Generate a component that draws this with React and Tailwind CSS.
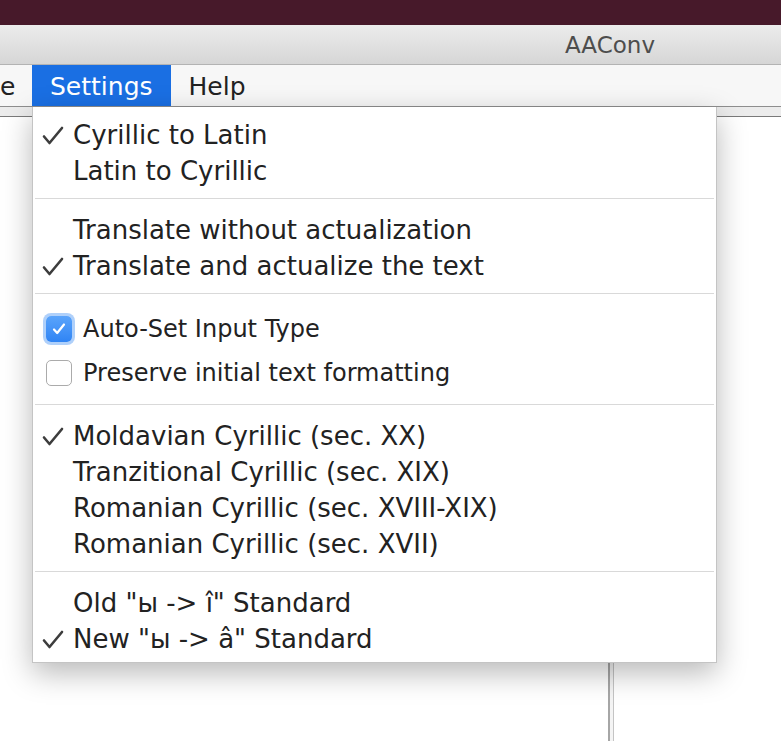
import React from 'react';

const Check = () => (
  <span className="flex w-[40px] pl-[9px] pt-[1px]">
    <svg width="22" height="19" viewBox="0 0 22 19" fill="none">
      <path d="M2 10.5l5.5 6.5L20 2" stroke="#3d3d3d" strokeWidth="2.6" strokeLinecap="round" strokeLinejoin="round" />
    </svg>
  </span>
);

const Item = ({ checked, children }) => (
  <div className="flex h-[36px] items-center whitespace-nowrap">
    {checked ? <Check /> : <span className="w-[40px]" />}
    <span>{children}</span>
  </div>
);

const Separator = () => (
  <div className="pt-[9px] pb-[13px]">
    <div className="mx-[2px] h-px bg-[#d9d9d9]" />
  </div>
);

const CheckRow = ({ checked, children }) => (
  <div className="flex h-[44px] items-center gap-[11px] pl-[13px] text-[24px] whitespace-nowrap">
    {checked ? (
      <span className="flex h-[26px] w-[26px] items-center justify-center rounded-[5px] bg-gradient-to-b from-[#5aa4fb] to-[#2f84f4] shadow-[0_0_0_3px_rgba(110,170,245,0.55)]">
        <svg width="16" height="16" viewBox="0 0 16 16" fill="none">
          <path d="M3 8.5l3.2 3.5L13 3.5" stroke="white" strokeWidth="2.2" strokeLinecap="round" strokeLinejoin="round" />
        </svg>
      </span>
    ) : (
      <span className="h-[26px] w-[26px] rounded-[5px] border border-[#ababab] bg-white" />
    )}
    <span>{children}</span>
  </div>
);

export default function App() {
  return (
    <div className="relative flex h-[741px] w-[781px] flex-col overflow-hidden bg-white font-['DejaVu_Sans',sans-serif] text-[#222]">
      {/* desktop strip */}
      <div className="h-[25px] bg-[#47192a]" />

      {/* title bar */}
      <div className="flex h-[40px] items-center border-b border-[#b3b3b3] bg-gradient-to-b from-[#ececec] to-[#d6d6d6] pl-[565px] pt-[2px] text-[23px] text-[#4d4d4d]">
        AAConv
      </div>

      {/* menu bar */}
      <div className="flex h-[42px] border-b border-[#8e8e8e] bg-[#f7f7f7] text-[25px]">
        <span className="flex w-[32px] items-center pt-[3px]">e</span>
        <span className="flex items-center bg-[#1a6fe3] px-[18px] pt-[3px] text-white">Settings</span>
        <span className="flex items-center px-[18px] pt-[3px]">Help</span>
      </div>

      <div className="h-[10px] border-b border-[#7a7a7a] bg-[#ececec]" />

      {/* content panes */}
      <div className="flex flex-1">
        <div className="w-[608px] bg-white" />
        <div className="w-[6px] border-l-2 border-r border-l-[#a6a6a6] border-r-[#c4c4c4] bg-[#f4f4f4]" />
        <div className="flex-1 bg-white" />
      </div>

      {/* Settings dropdown */}
      <div className="absolute left-[32px] top-[107px] h-[556px] w-[685px] border-x border-b border-[#c4c4c4] bg-white pt-[10px] text-[26px] shadow-[0_10px_28px_rgba(0,0,0,0.28)]">
        <Item checked>Cyrillic to Latin</Item>
        <Item>Latin to Cyrillic</Item>
        <Separator />
        <Item>Translate without actualization</Item>
        <Item checked>Translate and actualize the text</Item>
        <Separator />
        <CheckRow checked>Auto-Set Input Type</CheckRow>
        <CheckRow>Preserve initial text formatting</CheckRow>
        <Separator />
        <Item checked>Moldavian Cyrillic (sec. XX)</Item>
        <Item>Tranzitional Cyrillic (sec. XIX)</Item>
        <Item>Romanian Cyrillic (sec. XVIII-XIX)</Item>
        <Item>Romanian Cyrillic (sec. XVII)</Item>
        <Separator />
        <Item>Old "ы -&gt; î" Standard</Item>
        <Item checked>New "ы -&gt; â" Standard</Item>
      </div>
    </div>
  );
}
